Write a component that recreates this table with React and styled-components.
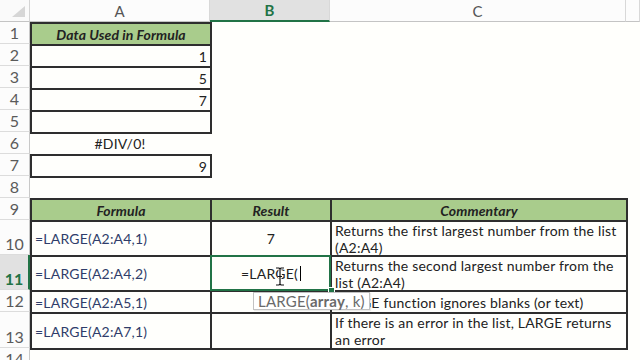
import styled, { createGlobalStyle, css } from 'styled-components';

const GlobalStyle = createGlobalStyle`
  html, body {
    margin: 0;
    padding: 0;
    background: #fffffc;
  }
`;

const green = '#217346';
const line = '#2e2e2e';

const Sheet = styled.div`
  position: relative;
  width: 640px;
  height: 360px;
  overflow: hidden;
  display: grid;
  grid-template-columns: 30px 180px 120px 296px 1fr;
  grid-template-rows: 22px repeat(9, 22px) 35px 35px 22px 36px 22px;
  background: #fffffc;
  font-family: Lato, "Liberation Sans", sans-serif;
`;

const Corner = styled.div`
  position: relative;
  background: #fafafa;
  border-bottom: 1px solid #c4c4c4;
  border-right: 1px solid #d4d4d4;
  &::after {
    content: '';
    position: absolute;
    right: 4px;
    bottom: 4px;
    width: 13px;
    height: 11px;
    background: #d6d6d6;
    clip-path: polygon(100% 0, 100% 100%, 0 100%);
  }
`;

const ColHead = styled.div`
  display: flex;
  align-items: center;
  justify-content: center;
  font-size: 15px;
  color: #555;
  background: #fcfcfc;
  border-bottom: 1px solid #c4c4c4;
  border-right: 1px solid #d8d8d8;
  ${(p) =>
    p.$active &&
    css`
      background: #e1e1e1;
      color: ${green};
      font-weight: 700;
      border-bottom: 2px solid ${green};
    `}
`;

const RowHead = styled.div`
  display: flex;
  align-items: flex-end;
  justify-content: center;
  padding-bottom: 1px;
  font-size: 16px;
  color: #5a5a5a;
  background: #fcfcfc;
  border-bottom: 1px solid #dcdcdc;
  border-right: 1px solid #c8c8c8;
  ${(p) =>
    p.$active &&
    css`
      background: #e1e1e1;
      color: ${green};
      font-weight: 700;
      border-right: 2px solid ${green};
    `}
`;

const Cell = styled.div`
  position: relative;
  display: flex;
  align-items: center;
  justify-content: ${(p) => p.$align || 'flex-start'};
  text-align: ${(p) => (p.$align === 'center' ? 'center' : 'left')};
  padding: 0 3px;
  font-size: 14px;
  line-height: 17px;
  letter-spacing: ${(p) => (p.$bold ? '0.1px' : '0.2px')};
  color: ${(p) => p.$color || '#222'};
  background: ${(p) => p.$fill || 'transparent'};
  font-weight: ${(p) => (p.$bold ? 700 : 400)};
  font-style: ${(p) => (p.$italic ? 'italic' : 'normal')};
  ${(p) =>
    p.$box &&
    css`
      border: 2px solid ${line};
      margin: 0 -2px -2px 0;
    `}
`;

const EditCell = styled(Cell)`
  &::after {
    content: '';
    position: absolute;
    inset: -2px -1px -1px -2px;
    border: 2px solid ${green};
    z-index: 2;
  }
  &::before {
    content: '';
    position: absolute;
    right: -5px;
    bottom: -4px;
    width: 5px;
    height: 5px;
    background: ${green};
    border: 1px solid #fff;
    z-index: 3;
  }
`;

const Caret = styled.span`
  display: inline-block;
  width: 1px;
  height: 15px;
  margin-left: 2px;
  background: #000;
`;

const Beam = styled.svg`
  position: absolute;
  left: 63px;
  top: 10px;
  z-index: 4;
`;

const Tip = styled.div`
  position: absolute;
  left: 253px;
  top: 292px;
  height: 16px;
  padding: 0 4px;
  display: flex;
  align-items: center;
  background: #fff;
  border: 1px solid #c2c2c2;
  box-shadow: 1px 1px 1px rgba(0, 0, 0, 0.08);
  color: #6a6a6a;
  font-size: 15px;
  letter-spacing: 0.2px;
  font-family: Lato, "Liberation Sans", sans-serif;
  z-index: 5;
  b {
    font-weight: 700;
  }
`;

const headFill = '#a9cc8c';
const formula = '#2f3d6a';

const rows = [
  { n: 1, A: { text: 'Data Used in Formula', box: true, fill: headFill, bold: true, italic: true, align: 'center' } },
  { n: 2, A: { text: '1', box: true, align: 'flex-end' } },
  { n: 3, A: { text: '5', box: true, align: 'flex-end' } },
  { n: 4, A: { text: '7', box: true, align: 'flex-end' } },
  { n: 5, A: { text: '', box: true } },
  { n: 6, A: { text: '#DIV/0!', align: 'center' } },
  { n: 7, A: { text: '9', box: true, align: 'flex-end' } },
  { n: 8 },
  {
    n: 9,
    A: { text: 'Formula', box: true, fill: headFill, bold: true, italic: true, align: 'center' },
    B: { text: 'Result', box: true, fill: headFill, bold: true, italic: true, align: 'center' },
    C: { text: 'Commentary', box: true, fill: headFill, bold: true, italic: true, align: 'center' },
  },
  {
    n: 10,
    A: { text: '=LARGE(A2:A4,1)', box: true, color: formula },
    B: { text: '7', box: true, align: 'center' },
    C: { text: 'Returns the first largest number from the list (A2:A4)', box: true },
  },
  {
    n: 11,
    A: { text: '=LARGE(A2:A4,2)', box: true, color: formula },
    B: { edit: true, box: true, align: 'center' },
    C: { text: 'Returns the second largest number from the list (A2:A4)', box: true },
  },
  {
    n: 12,
    A: { text: '=LARGE(A2:A5,1)', box: true, color: formula },
    B: { text: '', box: true },
    C: { text: 'LARGE function ignores blanks (or text)', box: true },
  },
  {
    n: 13,
    A: { text: '=LARGE(A2:A7,1)', box: true, color: formula },
    B: { text: '', box: true },
    C: { text: 'If there is an error in the list, LARGE returns an error', box: true },
  },
  { n: 14 },
];

function renderCell(key, c) {
  if (!c) return <Cell key={key} />;
  const props = {
    $box: c.box,
    $fill: c.fill,
    $bold: c.bold,
    $italic: c.italic,
    $align: c.align,
    $color: c.color,
  };
  if (c.edit) {
    return (
      <EditCell key={key} {...props}>
        <span>=LARGE(</span>
        <Caret />
        <Beam width="10" height="19" viewBox="0 0 10 19">
          <path
            d="M1 1h3l1 1 1-1h3M5 2v15M1 18h3l1-1 1 1h3M3 9.5h4"
            stroke="#fff"
            strokeWidth="3"
            fill="none"
          />
          <path
            d="M1 1h3l1 1 1-1h3M5 2v15M1 18h3l1-1 1 1h3M3 9.5h4"
            stroke="#111"
            strokeWidth="1.2"
            fill="none"
          />
        </Beam>
      </EditCell>
    );
  }
  return (
    <Cell key={key} {...props}>
      {c.text}
    </Cell>
  );
}

export default function App() {
  return (
    <>
      <GlobalStyle />
      <Sheet>
        <Corner />
        <ColHead>A</ColHead>
        <ColHead $active>B</ColHead>
        <ColHead>C</ColHead>
        <ColHead />
        {rows.map((r) => [
          <RowHead key={`h${r.n}`} $active={r.n === 11}>
            {r.n}
          </RowHead>,
          renderCell(`a${r.n}`, r.A),
          renderCell(`b${r.n}`, r.B),
          renderCell(`c${r.n}`, r.C),
          <Cell key={`d${r.n}`} />,
        ])}
        <Tip>
          LARGE(<b>array</b>, k)
        </Tip>
      </Sheet>
    </>
  );
}
